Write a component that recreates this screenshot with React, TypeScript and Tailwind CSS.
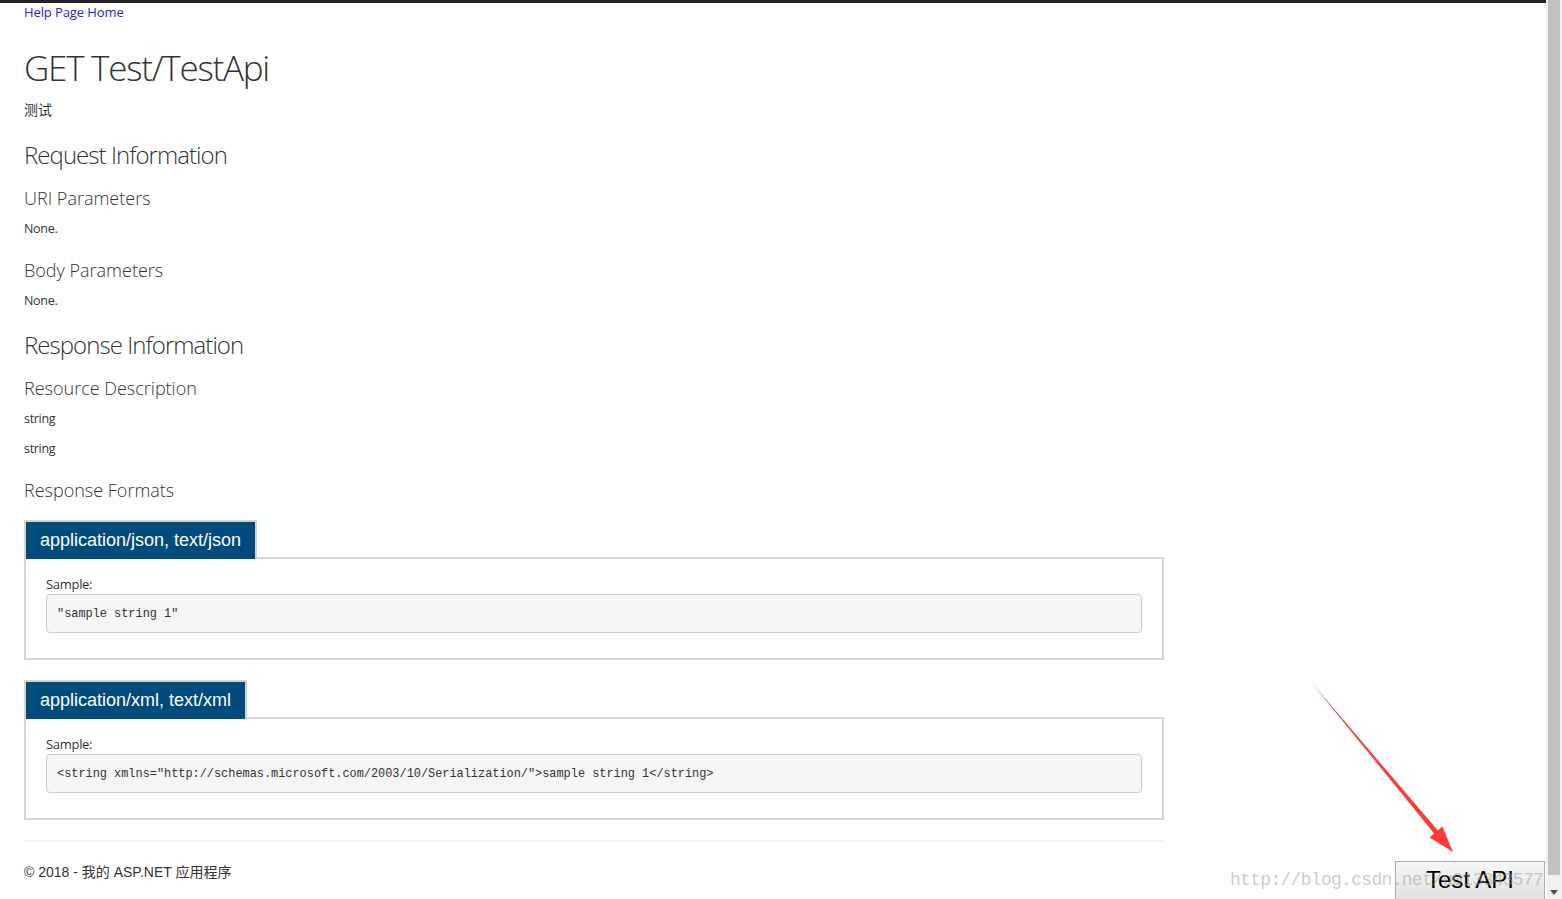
const sans = "font-['Open_Sans','Noto_Sans_CJK_SC',sans-serif]"

const FormatPanel = ({ title, code }: { title: string; code: string }) => (
  <div className="flex flex-col">
    <div className="relative z-10 -mb-[2px] self-start border-2 border-b-0 border-[#d3d3d3]">
      <div className="bg-[#004b7d] px-[14px] h-[37px] flex items-center text-white text-[18px] font-['Liberation_Sans',Arial,sans-serif]">
        {title}
      </div>
    </div>
    <div className="border-2 border-[#d6d6d6] px-[20px] pt-[15px] pb-[25px]">
      <p className={`${sans} text-[13px] leading-[20px] text-[#333] tracking-[-0.3px]`}>Sample:</p>
      <div className="h-[39px] flex items-center px-[10px] bg-[#f5f5f5] border border-[#cccccc] rounded-[4px]">
        <pre className="pt-[2px] font-['Liberation_Mono',monospace] text-[11.9px] text-[#333]">{code}</pre>
      </div>
    </div>
  </div>
)

export default function App() {
  return (
    <div className="relative w-[1562px] h-[899px] overflow-hidden bg-white flex">
      <div className="w-[1546px] h-full flex flex-col">
        <div className="h-[3px] bg-[#222] w-full" />
        <div className={`px-[24px] w-[1188px] flex flex-col ${sans} text-[#333]`}>
          <a className="self-start text-[13px] leading-[18px] text-[#2424e8] tracking-[-0.1px]" href="#">
            Help Page Home
          </a>
          <h1 className="mt-[25px] text-[35px] leading-[44px] font-light tracking-[-1.25px]">GET Test/TestApi</h1>
          <p className="mt-[10px] text-[14px] leading-[20px]">测试</p>
          <h2 className="mt-[19px] text-[24px] leading-[32px] font-light tracking-[-0.95px]">Request Information</h2>
          <h3 className="mt-[14px] text-[18px] leading-[26px] font-light">URI Parameters</h3>
          <p className="mt-[9px] text-[12.5px] leading-[18px] tracking-[-0.3px]">None.</p>
          <h3 className="mt-[19px] text-[18px] leading-[26px] font-light">Body Parameters</h3>
          <p className="mt-[9px] text-[12.5px] leading-[18px] tracking-[-0.3px]">None.</p>
          <h2 className="mt-[19px] text-[24px] leading-[32px] font-light tracking-[-0.95px]">Response Information</h2>
          <h3 className="mt-[14px] text-[18px] leading-[26px] font-light">Resource Description</h3>
          <p className="mt-[9px] text-[12.5px] leading-[18px] tracking-[-0.3px]">string</p>
          <p className="mt-[12px] text-[12.5px] leading-[18px] tracking-[-0.3px]">string</p>
          <h3 className="mt-[19px] text-[18px] leading-[26px] font-light">Response Formats</h3>

          <div className="mt-[17px] flex flex-col gap-[20px]">
            <FormatPanel title="application/json, text/json" code={'"sample string 1"'} />
            <FormatPanel
              title="application/xml, text/xml"
              code={'<string xmlns="http://schemas.microsoft.com/2003/10/Serialization/">sample string 1</string>'}
            />
          </div>

          <hr className="mt-[20px] border-0 border-t border-[#eeeeee]" />
          <footer className="mt-[21px] text-[14px] leading-[20px] font-['Liberation_Sans','Noto_Sans_CJK_SC',sans-serif] text-[#333]">
            © 2018 - 我的 ASP.NET 应用程序
          </footer>
        </div>
      </div>

      {/* scrollbar */}
      <div className="w-[16px] h-full bg-[#f1f1f1] flex flex-col items-center">
        <div className="w-[12px] h-[875px] bg-[#c1c1c1]" />
        <div className="flex-1 flex items-end pb-[4px]">
          <svg width="8" height="5" viewBox="0 0 8 5">
            <path d="M0 0 L8 0 L4 5 Z" fill="#505050" />
          </svg>
        </div>
      </div>

      {/* annotation arrow */}
      <svg className="absolute left-0 top-0 pointer-events-none" width="1562" height="899">
        <polygon
          points="1311,682 1437.9,830.4 1442.4,826.6 1453,852 1429.6,837.4 1434.1,833.6"
          fill="#ff3b3b"
        />
      </svg>

      <button className="absolute left-[1395px] top-[861px] w-[150px] h-[40px] border border-[#adadad] bg-gradient-to-b from-[#f7f7f7] to-[#e1e1e1] text-black text-[24px] font-['Liberation_Sans',Arial,sans-serif] flex items-center justify-center pb-[2px]">
        Test API
      </button>

      <div className="absolute left-[1230px] top-[867px] font-['Liberation_Mono',monospace] text-[18px] tracking-[-0.7px] text-[#a0a0a0]/55 whitespace-nowrap pointer-events-none">
        http://blog.csdn.net/u013343577
      </div>
    </div>
  )
}
